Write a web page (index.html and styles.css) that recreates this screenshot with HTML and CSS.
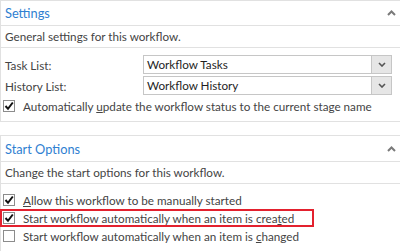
FILE: index.html
```html
<!DOCTYPE html>
<html lang="en">
  <head>
    <meta charset="UTF-8" />
    <meta name="viewport" content="width=device-width, initial-scale=1.0" />
    <title>Workflow Settings</title>
    <link rel="stylesheet" href="styles.css">
  </head>
  <body>
    <div class="panel">
      <section class="group">
        <div class="group-head">
          <h2>Settings</h2>
          <svg class="collapse" width="9" height="6" viewBox="0 0 9 6">
            <polyline points="1,5 4.5,1.5 8,5" fill="none" stroke="#7a7a7a" stroke-width="2" />
          </svg>
        </div>
        <p class="group-desc">General settings for this workflow.</p>
        <div class="group-body">
          <div class="field">
            <label>Task List:</label>
            <div class="select">
              <span class="select-value">Workflow Tasks</span>
              <span class="select-btn">
                <svg width="8" height="5" viewBox="0 0 8 5">
                  <polyline points="1,1 4,4 7,1" fill="none" stroke="#555" stroke-width="1.6" />
                </svg>
              </span>
            </div>
          </div>
          <div class="field">
            <label>History List:</label>
            <div class="select">
              <span class="select-value">Workflow History</span>
              <span class="select-btn">
                <svg width="8" height="5" viewBox="0 0 8 5">
                  <polyline points="1,1 4,4 7,1" fill="none" stroke="#555" stroke-width="1.6" />
                </svg>
              </span>
            </div>
          </div>
          <div class="check first">
            <span class="box">
              <svg width="10" height="10" viewBox="0 0 10 10">
                <polyline points="1.5,5 4,7.8 8.8,1.5" fill="none" stroke="#111" stroke-width="2" />
              </svg>
            </span>
            <span>Automatically <u>u</u>pdate the workflow status to the current stage name</span>
          </div>
        </div>
      </section>

      <section class="group">
        <div class="group-head">
          <h2>Start Options</h2>
          <svg class="collapse" width="9" height="6" viewBox="0 0 9 6">
            <polyline points="1,5 4.5,1.5 8,5" fill="none" stroke="#7a7a7a" stroke-width="2" />
          </svg>
        </div>
        <p class="group-desc">Change the start options for this workflow.</p>
        <div class="group-body">
          <div class="check">
            <span class="box">
              <svg width="10" height="10" viewBox="0 0 10 10">
                <polyline points="1.5,5 4,7.8 8.8,1.5" fill="none" stroke="#111" stroke-width="2" />
              </svg>
            </span>
            <span><u>A</u>llow this workflow to be manually started</span>
          </div>
          <div class="check">
            <span class="box">
              <svg width="10" height="10" viewBox="0 0 10 10">
                <polyline points="1.5,5 4,7.8 8.8,1.5" fill="none" stroke="#111" stroke-width="2" />
              </svg>
            </span>
            <span>Start workflow automatically when an item is crea<u>t</u>ed</span>
            <span class="highlight"></span>
          </div>
          <div class="check">
            <span class="box"></span>
            <span>Start workflow automatically when an item is <u>c</u>hanged</span>
          </div>
        </div>
      </section>
    </div>
  </body>
</html>
```

FILE: styles.css
```css
body {
  margin: 0;
  padding: 0;
  background-color: #ffffff;
  font-family: Lato, "Open Sans", sans-serif;
  font-size: 11.7px;
  color: #444444;
  overflow: hidden;
}

.panel {
  display: flex;
  flex-direction: column;
  gap: 13px;
}

.group {
  border: 1px solid #e1e1e1;
  border-right: 0;
}

.group-head {
  display: flex;
  align-items: center;
  justify-content: space-between;
  height: 24px;
  padding: 0 4px;
  border-bottom: 1px solid #e1e1e1;
}

.group + .group .group-head {
  height: 25px;
}

.group-head h2 {
  margin: 0;
  font-size: 12.8px;
  font-weight: normal;
  color: #2f80d1;
}

.group-desc {
  margin: 0;
  height: 21px;
  line-height: 21px;
  padding-left: 4px;
  border-bottom: 1px solid #e1e1e1;
}

.group-body {
  padding: 7px 0 6px;
}

.field {
  display: flex;
  align-items: center;
  height: 19px;
  margin-bottom: 2px;
  padding-left: 4px;
}

.field label {
  width: 138px;
}

.select {
  display: flex;
  width: 249px;
  height: 19px;
  box-sizing: border-box;
  border: 1px solid #c6c6c6;
  background: #ffffff;
}

.select-value {
  flex: 1;
  line-height: 17px;
  padding-left: 3px;
  color: #1e1e1e;
}

.select-btn {
  display: flex;
  align-items: center;
  justify-content: center;
  width: 19px;
  background: #e6e6e6;
  border-left: 1px solid #c6c6c6;
}

.check {
  position: relative;
  display: flex;
  align-items: center;
  height: 18px;
  padding-left: 2px;
  white-space: nowrap;
}

.check.first {
  margin-top: 1px;
}

.box {
  display: flex;
  align-items: center;
  justify-content: center;
  width: 12px;
  height: 12px;
  box-sizing: border-box;
  border: 1px solid #8c8c8c;
  background: #ffffff;
  margin-right: 8px;
}

.highlight {
  position: absolute;
  left: -1px;
  top: 0;
  width: 314px;
  height: 18px;
  box-sizing: border-box;
  border: 2px solid #e3212e;
}
```
